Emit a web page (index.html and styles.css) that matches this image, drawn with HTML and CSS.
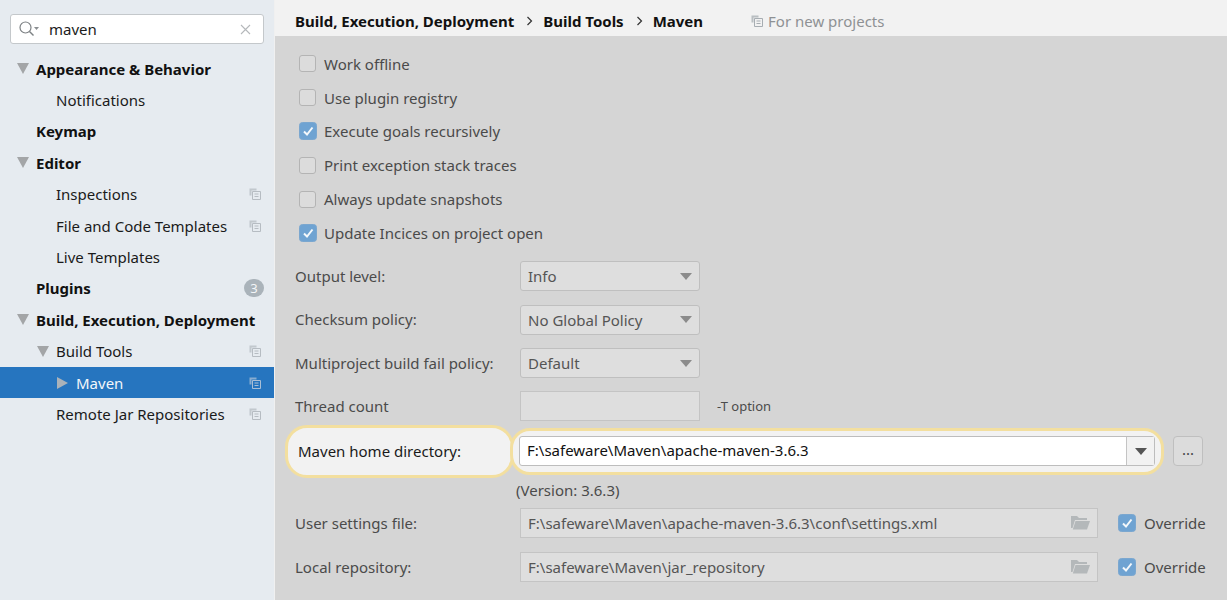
FILE: index.html
```html
<!DOCTYPE html>
<html lang="en">
<head>
<meta charset="utf-8">
<title>Settings - Maven</title>
<link rel="stylesheet" href="styles.css">
</head>
<body>
<svg class="defs" width="0" height="0" aria-hidden="true">
  <defs>
    <symbol id="copy" viewBox="0 0 12 12">
      <path d="M0.5 0.5h7v2H2.5v5h-2z" fill="currentColor" opacity=".75"/>
      <path d="M3.5 3.5h8v8h-8z" fill="none" stroke="currentColor"/>
      <path d="M5.5 6h4M5.5 8.5h4" stroke="currentColor" fill="none"/>
    </symbol>
    <symbol id="check" viewBox="0 0 18 18">
      <rect x="0.5" y="0.5" width="17" height="17" rx="3" fill="#6fa3d2" stroke="#7ba7cf"/>
      <path d="M5 9.5l3 3 5.5-7" fill="none" stroke="#f4f8fb" stroke-width="2"/>
    </symbol>
    <symbol id="folder" viewBox="0 0 19 15">
      <path d="M0 1h6l2 2h8v2H4L1.500 13H0z" fill="#b4b8ba"/>
      <path d="M4.500 6H19l-3 8.500H1.800z" fill="#b4b8ba"/>
    </symbol>
  </defs>
</svg>
<div class="app">
  <aside class="sidebar">
    <div class="search">
      <svg class="search-icon" width="22" height="18" viewBox="0 0 22 18"><circle cx="7.500" cy="7.500" r="5.500" fill="none" stroke="#7d8184" stroke-width="1.200"/><path d="M11.500 11.500l4 4" stroke="#7d8184" stroke-width="1.400"/><path d="M16 7h5l-2.500 3z" fill="#8a8e91"/></svg>
      <span class="search-text">maven</span>
      <svg class="search-clear" width="11" height="11" viewBox="0 0 11 11"><path d="M1 1l9 9M10 1l-9 9" stroke="#b5b8bb" stroke-width="1.100"/></svg>
    </div>
    <ul class="tree">
      <li class="node bold"><i class="tri down"></i><span class="name">Appearance &amp; Behavior</span></li>
      <li class="node lvl1"><span class="name">Notifications</span></li>
      <li class="node bold"><span class="name">Keymap</span></li>
      <li class="node bold"><i class="tri down"></i><span class="name">Editor</span></li>
      <li class="node lvl1"><span class="name">Inspections</span><svg class="copy"><use href="#copy"/></svg></li>
      <li class="node lvl1"><span class="name">File and Code Templates</span><svg class="copy"><use href="#copy"/></svg></li>
      <li class="node lvl1"><span class="name">Live Templates</span></li>
      <li class="node bold"><span class="name">Plugins</span><span class="badge">3</span></li>
      <li class="node bold"><i class="tri down"></i><span class="name">Build, Execution, Deployment</span></li>
      <li class="node lvl1"><i class="tri down"></i><span class="name">Build Tools</span><svg class="copy"><use href="#copy"/></svg></li>
      <li class="node lvl2 selected"><i class="tri right"></i><span class="name">Maven</span><svg class="copy"><use href="#copy"/></svg></li>
      <li class="node lvl1"><span class="name">Remote Jar Repositories</span><svg class="copy"><use href="#copy"/></svg></li>
    </ul>
  </aside>
  <main class="panel">
    <header class="crumbs">
      <span class="crumb">Build, Execution, Deployment</span>
      <svg class="chev" width="7" height="10" viewBox="0 0 7 10"><path d="M1.500 1l4 4-4 4" fill="none" stroke="#333" stroke-width="1.200"/></svg>
      <span class="crumb">Build Tools</span>
      <svg class="chev" width="7" height="10" viewBox="0 0 7 10"><path d="M1.500 1l4 4-4 4" fill="none" stroke="#333" stroke-width="1.200"/></svg>
      <span class="crumb">Maven</span>
      <span class="scope"><svg class="copy scope-icon"><use href="#copy"/></svg>For new projects</span>
    </header>
    <section class="content">
      <div class="checks">
        <label class="check"><span class="box"></span>Work offline</label>
        <label class="check"><span class="box"></span>Use plugin registry</label>
        <label class="check"><svg class="tick"><use href="#check"/></svg>Execute goals recursively</label>
        <label class="check"><span class="box"></span>Print exception stack traces</label>
        <label class="check"><span class="box"></span>Always update snapshots</label>
        <label class="check"><svg class="tick"><use href="#check"/></svg>Update Incices on project open</label>
      </div>
      <div class="form">
        <div class="row"><span class="label">Output level:</span><div class="select"><span>Info</span><i class="arrow"></i></div></div>
        <div class="row"><span class="label">Checksum policy:</span><div class="select"><span>No Global Policy</span><i class="arrow"></i></div></div>
        <div class="row"><span class="label">Multiproject build fail policy:</span><div class="select"><span>Default</span><i class="arrow"></i></div></div>
        <div class="row"><span class="label">Thread count</span><div class="input short"></div><span class="hint">-T option</span></div>
        <div class="row home">
          <span class="spot-label">Maven home directory:</span>
          <div class="spot-field">
            <div class="combo"><span class="combo-text">F:\safeware\Maven\apache-maven-3.6.3</span><span class="combo-btn"><i class="arrow dark"></i></span></div>
          </div>
          <button class="more" type="button">...</button>
        </div>
        <div class="version">(Version: 3.6.3)</div>
        <div class="row path"><span class="label">User settings file:</span><div class="input wide"><span>F:\safeware\Maven\apache-maven-3.6.3\conf\settings.xml</span><svg class="folder"><use href="#folder"/></svg></div><label class="override"><svg class="tick"><use href="#check"/></svg>Override</label></div>
        <div class="row path"><span class="label">Local repository:</span><div class="input wide"><span>F:\safeware\Maven\jar_repository</span><svg class="folder"><use href="#folder"/></svg></div><label class="override"><svg class="tick"><use href="#check"/></svg>Override</label></div>
      </div>
    </section>
  </main>
</div>
</body>
</html>
```
FILE: styles.css
```css
* { box-sizing: border-box; }
html, body { margin: 0; height: 100%; }
body {
  font-family: "Noto Sans", "Open Sans", sans-serif;
  font-size: 15px;
  color: #1a1a1a;
  overflow: hidden;
  background: #d5d5d5;
}
.defs { position: absolute; }
.app { display: flex; width: 1227px; height: 600px; }

.sidebar { width: 275px; flex: none; background: #e6ebf0; padding-top: 14px; border-right: 1px solid #f0f0f0; }
.search {
  display: flex; align-items: center;
  width: 254px; height: 30px; margin-left: 10px; padding: 0 12px 0 7px;
  background: #fff; border: 1px solid #c4c8cb; border-radius: 3px;
}
.search-icon { flex: none; }
.search-text { margin-left: 9px; flex: 1; color: #1c1c1c; }
.tree { list-style: none; margin: 9px 0 0; padding: 0; }
.node { position: relative; display: flex; align-items: center; height: 31.4px; padding-left: 36px; padding-right: 13px; }
.node.bold { font-weight: 700; color: #111; }
.node.lvl1 { padding-left: 56px; }
.node.lvl2 { padding-left: 76px; }
.name { flex: 1; white-space: nowrap; }
.selected { background: #2675bf; color: #f2f6fa; }
.tri { position: absolute; width: 0; height: 0; }
.tri.down { margin-left: -19px; border-left: 6px solid transparent; border-right: 6px solid transparent; border-top: 11px solid #a3a5a7; }
.tri.right { margin-left: -19px; border-top: 6px solid transparent; border-bottom: 6px solid transparent; border-left: 11px solid #aab2b9; }
.copy { width: 12px; height: 12px; color: #b6bcc2; flex: none; }
.selected .copy { color: #a9bfd6; }
.badge { width: 20px; height: 18px; margin-right: -3px; border-radius: 9px; background: #aab3ba; color: #f4f6f8; font-size: 13px; font-weight: 400; line-height: 18px; text-align: center; }

.panel { flex: 1; display: flex; flex-direction: column; min-width: 0; }
.crumbs { height: 36px; flex: none; display: flex; align-items: center; padding: 0 0 0 20px; background: #f2f2f2; font-weight: 700; color: #111; padding-top: 8px; padding-bottom: 3px; }
.crumb { white-space: nowrap; }
.chev { margin: 0 10px 0 12px; }
.scope { display: flex; align-items: center; margin-left: 48px; font-weight: 400; color: #8e9194; }
.scope-icon { margin-right: 5px; color: #a7adb2; }

.content { flex: 1; padding: 11px 0 0 20px; color: #4b4b4b; }
.checks { display: flex; flex-direction: column; }
.check { display: flex; align-items: center; height: 33.8px; padding-left: 4px; color: #4a4a4a; }
.box { width: 17px; height: 17px; margin-right: 8px; border: 1px solid #b4b4b4; border-radius: 3px; background: #dcdcdc; }
.tick { width: 18px; height: 18px; margin-right: 7px; flex: none; }

.form { display: flex; flex-direction: column; margin-top: 4px; }
.row { display: flex; align-items: center; height: 43.6px; }
.label { width: 225px; flex: none; white-space: nowrap; }
.select {
  display: flex; align-items: center; justify-content: space-between;
  width: 180px; height: 30px; padding: 0 7px; margin-top: 1px;
  background: #dedede; border: 1px solid #bfbfbf; border-radius: 3px; color: #555;
}
.arrow { width: 0; height: 0; border-left: 6px solid transparent; border-right: 6px solid transparent; border-top: 7px solid #8b8b8b; }
.arrow.dark { border-top-color: #555; }
.input { height: 30px; background: #dedede; border: 1px solid #c4c4c4; color: #555; }
.input.short { width: 180px; }
.hint { margin-left: 17px; font-size: 13px; color: #4b4b4b; }

.row.home { height: 46px; }
.spot-label {
  width: 229px; height: 53px; flex: none; margin-left: -10px; padding-left: 10px;
  display: flex; align-items: center; position: relative; z-index: 1;
  background: #f2f2f2; border: 3px solid #f3df9f; border-radius: 22px; color: #1a1a1a;
}
.spot-field {
  width: 654px; height: 47px; margin-left: -4px; padding: 0 6px 0 6px;
  display: flex; align-items: center; position: relative; z-index: 2;
  background: #f2f2f2; border: 3px solid #f3df9f; border-left-color: #f3df9f; border-radius: 20px;
}
.combo { flex: 1; display: flex; align-items: stretch; height: 30px; background: #fff; border: 1px solid #bdbdbd; border-radius: 3px; }
.combo-text { flex: 1; padding-left: 7px; line-height: 26px; color: #111; }
.combo-btn { width: 28px; display: flex; align-items: center; justify-content: center; border-left: 1px solid #c4c4c4; background: #f2f2f2; }
.more {
  width: 30px; height: 30px; margin-left: 9px; padding: 0 0 5px;
  background: #dcdcdc; border: 1px solid #bfbfbf; border-radius: 4px;
  font: inherit; color: #444;
}
.version { height: 27px; padding: 6px 0 0 221px; line-height: 20px; }
.input.wide { width: 578px; display: flex; align-items: center; justify-content: space-between; padding: 0 7px 0 7px; }
.folder { width: 19px; height: 15px; }
.override { display: flex; align-items: center; margin-left: 20px; color: #4a4a4a; }
.override .tick { margin-right: 8px; }
```
